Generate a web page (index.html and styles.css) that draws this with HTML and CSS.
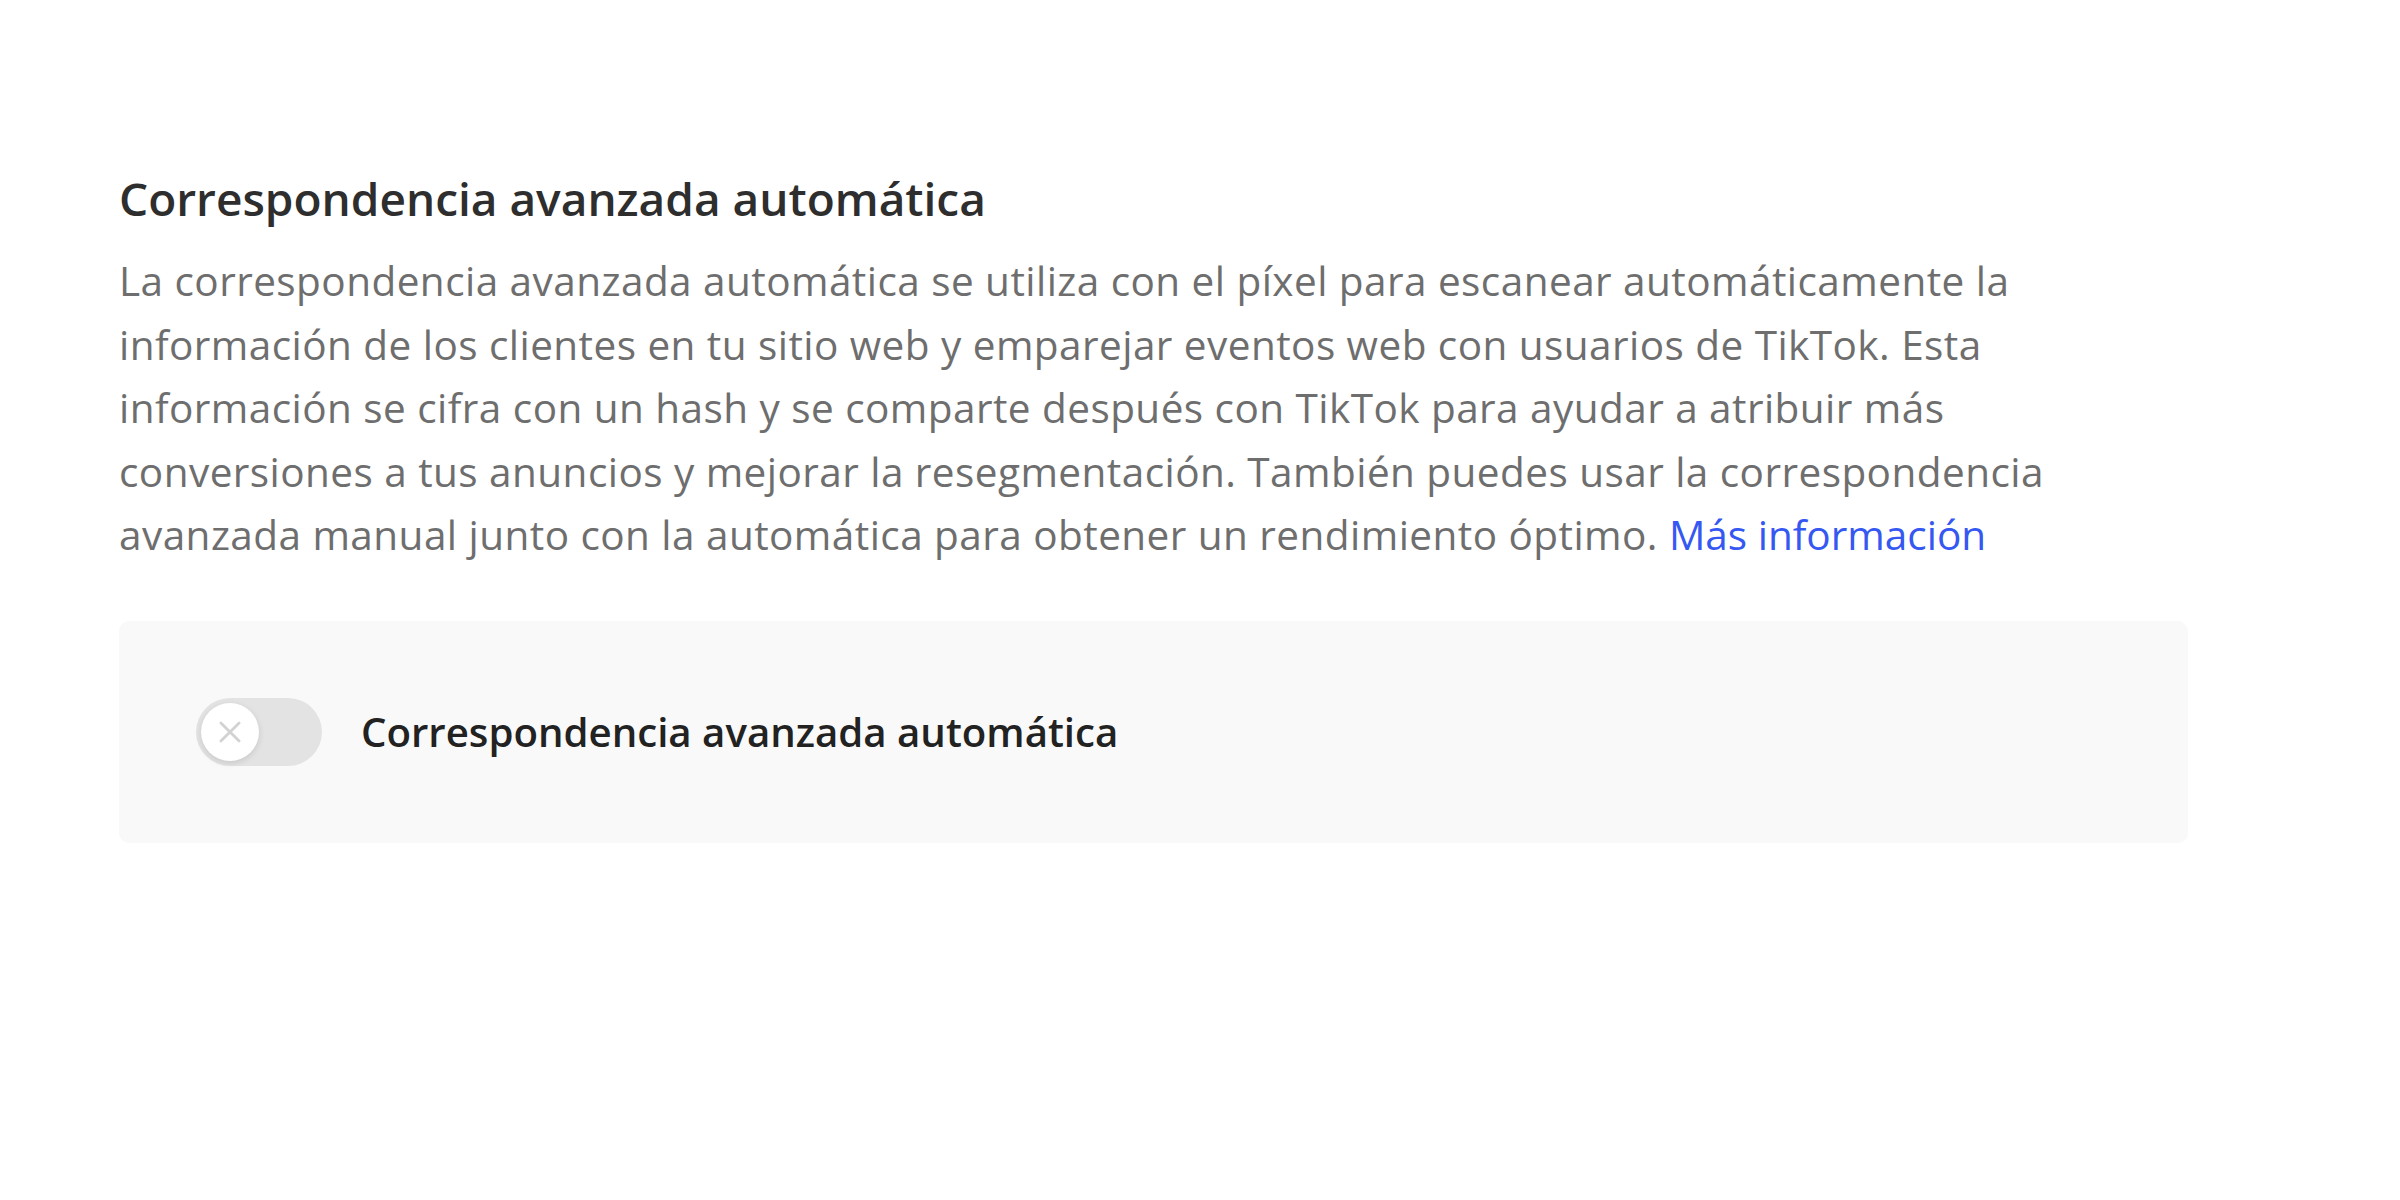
FILE: index.html
```html
<!DOCTYPE html>
<html lang="es">
<head>
  <meta charset="UTF-8">
  <meta name="viewport" content="width=device-width, initial-scale=1">
  <title>Correspondencia avanzada automática</title>
  <link rel="stylesheet" href="styles.css">
</head>
<body>

<section class="setting">
  <h2 class="setting-title">Correspondencia avanzada automática</h2>
  <p class="setting-desc">
    La correspondencia avanzada automática se utiliza con el píxel para escanear automáticamente la
    información de los clientes en tu sitio web y emparejar eventos web con usuarios de TikTok. Esta
    información se cifra con un hash y se comparte después con TikTok para ayudar a atribuir más
    conversiones a tus anuncios y mejorar la resegmentación. También puedes usar la correspondencia
    avanzada manual junto con la automática para obtener un rendimiento óptimo.
    <a href="#" class="more-link">Más información</a>
  </p>

  <div class="setting-box">
    <label class="switch">
      <input type="checkbox">
      <span class="knob">
        <svg viewBox="0 0 20 20" width="28" height="28">
          <path d="M3.5 3.5 L16.5 16.5 M16.5 3.5 L3.5 16.5" stroke="#d2d2d2" stroke-width="2" stroke-linecap="round" fill="none"/>
        </svg>
      </span>
    </label>
    <span class="switch-label">Correspondencia avanzada automática</span>
  </div>
</section>

</body>
</html>
```

FILE: styles.css
```css
body {
  font-family: 'Open Sans', Lato, sans-serif;
  margin: 0;
  padding: 0;
  background-color: #fff;
}
.setting {
  width: 2069px;
  padding: 166px 0 0 119px;
}
.setting-title {
  font-size: 46px;
  font-weight: 600;
  color: #2e2e2e;
  line-height: 64px;
  margin: 0;
}
.setting-desc {
  font-size: 40.5px;
  letter-spacing: 0.45px;
  line-height: 63.5px;
  color: #6e6e6e;
  margin: 19px 0 0;
  width: 1990px;
}
.more-link {
  color: #3557f2;
  text-decoration: none;
  letter-spacing: 0;
}
.setting-box {
  margin-top: 54px;
  height: 222px;
  width: 1992px;
  padding: 0 0 0 77px;
  background: #f9f9f9;
  border-radius: 10px;
  display: flex;
  align-items: center;
  gap: 39px;
}
.switch {
  position: relative;
  width: 126px;
  height: 68px;
  border-radius: 34px;
  background: #e3e3e3;
  cursor: pointer;
  flex-shrink: 0;
}
.switch input {
  display: none;
}
.knob {
  position: absolute;
  top: 5px;
  left: 5px;
  width: 58px;
  height: 58px;
  border-radius: 50%;
  background: #fff;
  box-shadow: 0 2px 6px rgba(0,0,0,0.12);
  display: flex;
  align-items: center;
  justify-content: center;
}
.switch-label {
  font-size: 40.2px;
  font-weight: 600;
  color: #222;
}
```
